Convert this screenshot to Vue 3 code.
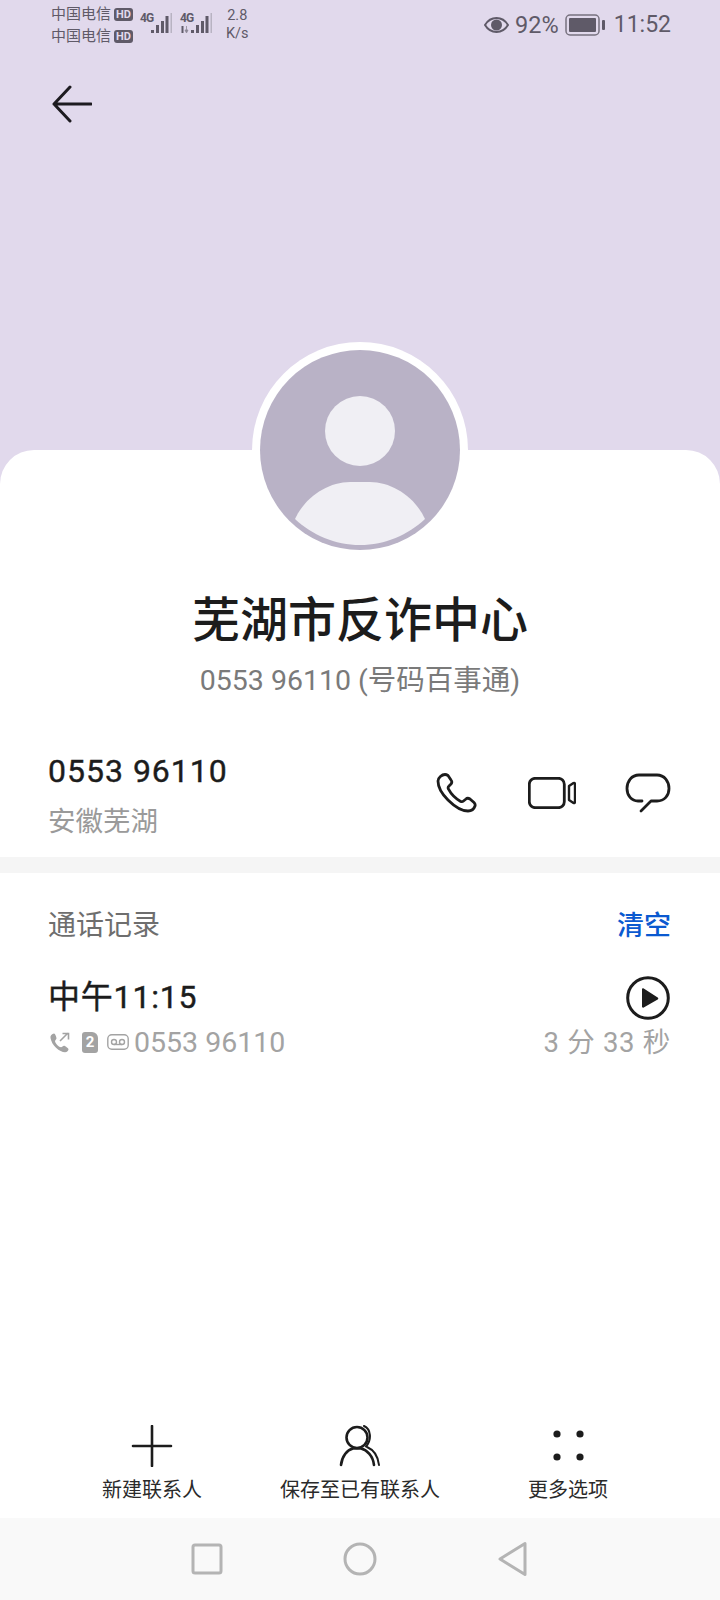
<script setup>
const signals = [
  { label: '4G', sub: false },
  { label: '4G', sub: true },
]
const tools = [
  { key: 'add', label: '新建联系人' },
  { key: 'person', label: '保存至已有联系人' },
  { key: 'more', label: '更多选项' },
]
</script>

<template>
  <div class="screen">
    <header class="top">
      <div class="status">
        <div class="carriers">
          <div v-for="n in 2" :key="n" class="carrier">中国电信<span class="hd">HD</span></div>
        </div>
        <div v-for="(s, i) in signals" :key="i" class="signal">
          <span class="net">{{ s.label }}</span>
          <svg width="33" height="24" viewBox="0 0 33 24">
            <template v-if="s.sub">
              <rect x="1.500" y="14" width="2" height="7" fill="#5f5a68" />
              <path d="M6.500 14v4M5 18l1.500 3L8 18z" fill="#8b8694" stroke="#8b8694" stroke-width=".8" />
            </template>
            <rect x="11" y="18" width="3" height="3" fill="#5f5a68" />
            <rect x="16" y="13" width="3" height="8" fill="#5f5a68" />
            <rect x="21" y="9" width="3" height="12" fill="#5f5a68" />
            <rect x="25.500" y="4" width="3" height="17" fill="#5f5a68" />
            <rect x="30.500" y="1" width="1.500" height="20" fill="#b8b3c2" />
          </svg>
        </div>
        <div class="speed"><span>2.8</span><span>K/s</span></div>
        <div class="status-right">
          <svg width="25" height="18" viewBox="0 0 25 18">
            <path d="M1 9C4 4 8 2 12.500 2S21 4 24 9c-3 5-7 7-11.500 7S4 14 1 9z" fill="none" stroke="#5f5a68" stroke-width="2" />
            <circle cx="12.500" cy="9" r="5.500" fill="#5f5a68" />
          </svg>
          <span class="pct">92%</span>
          <svg width="40" height="22" viewBox="0 0 40 22">
            <rect x="1" y="1" width="33" height="20" rx="4" fill="none" stroke="#77727f" stroke-width="1.500" />
            <rect x="4" y="4" width="27" height="14" rx="1" fill="#5f5a68" />
            <rect x="37" y="6" width="3" height="10" rx="1" fill="#5f5a68" />
          </svg>
          <span class="clock">11:52</span>
        </div>
      </div>
      <button class="back" aria-label="返回">
        <svg width="40" height="38" viewBox="0 0 40 38">
          <path d="M39 19H2M18 2L2 19l16 17" fill="none" stroke="#1d1b20" stroke-width="3" stroke-linecap="round" stroke-linejoin="round" />
        </svg>
      </button>
    </header>

    <main class="sheet">
      <div class="avatar-ring">
        <svg width="200" height="200" viewBox="0 0 200 200" class="avatar">
          <circle cx="100" cy="100" r="100" fill="#b9b2c6" />
          <circle cx="100" cy="81" r="35" fill="#f0eff4" />
          <path d="M35 169C45 147 68 132 90 132h20c22 0 45 15 55 37C148 185 125 195 100 195S52 185 35 169z" fill="#f0eff4" />
        </svg>
      </div>

      <h1 class="name">芜湖市反诈中心</h1>
      <p class="subtitle">0553 96110 (号码百事通)</p>

      <section class="number-row">
        <div>
          <div class="number">0553 96110</div>
          <div class="region">安徽芜湖</div>
        </div>
        <div class="actions">
          <svg width="42" height="42" viewBox="0 0 42 42">
            <path d="M10 2.500c-3 0-7 3-7 6.500 0 6 4 13 10 19s14 11 20 11c3 0 6-2 7-5 .5-1.500 0-2.500-1-3.500l-4-3.500c-1.500-1-3-1-4 0l-2.500 2c-1 .8-2 .8-3.200.2-4-2.200-9.500-7.700-11.800-12-.6-1.200-.5-2.300.5-3.200l2-2c1-1.200 1-2.700 0-4l-3-4.500C12.200 3 11 2.500 10 2.500z" fill="none" stroke="#1c1c1c" stroke-width="2.800" stroke-linejoin="round" />
          </svg>
          <svg width="48" height="32" viewBox="0 0 48 32">
            <rect x="1.300" y="1.300" width="35" height="29.400" rx="6" fill="none" stroke="#1c1c1c" stroke-width="2.800" />
            <path d="M41 9l4.500-3c.8-.4 1.500 0 1.500 1v18c0 1-.7 1.400-1.500 1L41 23z" fill="none" stroke="#1c1c1c" stroke-width="2.400" stroke-linejoin="round" />
          </svg>
          <svg width="46" height="40" viewBox="0 0 46 40">
            <path d="M17 28h-4C6.500 28 2 22.500 2 15.500S6.500 2 14 2h18c7.500 0 12 6.500 12 13.500S39.500 28 32 28h-6l-10 10" fill="none" stroke="#1c1c1c" stroke-width="2.800" stroke-linecap="round" stroke-linejoin="round" />
          </svg>
        </div>
      </section>

      <div class="divider"></div>

      <section class="log">
        <div class="log-head">
          <span class="log-title">通话记录</span>
          <span class="clear">清空</span>
        </div>
        <div class="log-item">
          <div class="log-main">
            <div class="log-time">中午11:15</div>
            <div class="log-meta">
              <svg class="dir" width="21" height="21" viewBox="0 0 21 21">
                <path d="M5 1.500C3 2 1 3.500 1.500 6c.7 3.500 2.500 7 5.500 9.800s6.500 4.500 9 4.500c2 0 3.500-1.500 3.500-3 0-1-3.500-3.500-4.500-3.500s-2 1.500-3 1.500c-2 0-5.500-3.500-6-6 0-1 1.500-2 1.500-3S6 1.300 5 1.500z" fill="#a3a3a3" />
                <path d="M11 9l8-8M13.500 1.500H19.500V7.500" fill="none" stroke="#a3a3a3" stroke-width="1.600" />
              </svg>
              <span class="sim">2</span>
              <svg class="vm" width="22" height="16" viewBox="0 0 22 16">
                <rect x=".8" y=".8" width="20.400" height="14.400" rx="4" fill="none" stroke="#a3a3a3" stroke-width="1.400" />
                <circle cx="7" cy="8" r="2.500" fill="none" stroke="#a3a3a3" stroke-width="1.400" />
                <circle cx="15" cy="8" r="2.500" fill="none" stroke="#a3a3a3" stroke-width="1.400" />
                <path d="M7 10.500h8" stroke="#a3a3a3" stroke-width="1.400" />
              </svg>
              <span class="log-number">0553 96110</span>
            </div>
          </div>
          <div class="log-side">
            <svg width="44" height="44" viewBox="0 0 44 44">
              <circle cx="22" cy="22" r="20.300" fill="none" stroke="#1c1c1c" stroke-width="3" />
              <path d="M16 13.500v17c0 1 .8 1.500 1.700 1l14-8c.8-.6.800-1.600 0-2.100l-14-8.900c-.9-.5-1.700 0-1.700 1z" fill="#1c1c1c" />
            </svg>
            <div class="duration">3 分 33 秒</div>
          </div>
        </div>
      </section>

      <div class="toolbar">
        <div v-for="t in tools" :key="t.key" class="tool">
          <svg width="44" height="42" viewBox="0 0 44 42">
            <template v-if="t.key === 'add'">
              <path d="M3 21h38M22 1v40" fill="none" stroke="#1c1c1c" stroke-width="2.600" stroke-linecap="round" />
            </template>
            <template v-else-if="t.key === 'person'">
              <circle cx="19" cy="12.500" r="10.500" fill="none" stroke="#1c1c1c" stroke-width="2.600" />
              <path d="M3 40C4 31 9 25 15 23.500h8C29 25 35 31 36 40" fill="none" stroke="#1c1c1c" stroke-width="2.600" stroke-linecap="round" />
              <path d="M26 1c7 3 8 14 2 20.500M29 22c7 3 11 9 12 18" fill="none" stroke="#1c1c1c" stroke-width="2" stroke-linecap="round" />
            </template>
            <template v-else>
              <circle cx="11" cy="9" r="3.600" fill="#1c1c1c" />
              <circle cx="34" cy="9" r="3.600" fill="#1c1c1c" />
              <circle cx="11" cy="32" r="3.600" fill="#1c1c1c" />
              <circle cx="34" cy="32" r="3.600" fill="#1c1c1c" />
            </template>
          </svg>
          <span class="tool-label">{{ t.label }}</span>
        </div>
      </div>
    </main>

    <nav class="navbar">
      <svg width="32" height="32" viewBox="0 0 32 32">
        <rect x="2" y="2" width="28" height="28" rx="2" fill="none" stroke="#b4b4b4" stroke-width="3" />
      </svg>
      <svg width="34" height="34" viewBox="0 0 34 34">
        <circle cx="17" cy="17" r="15" fill="none" stroke="#b4b4b4" stroke-width="3" />
      </svg>
      <svg width="32" height="36" viewBox="0 0 32 36">
        <path d="M28 2.500v31L3 18z" fill="none" stroke="#b4b4b4" stroke-width="3" stroke-linejoin="round" />
      </svg>
    </nav>
  </div>
</template>

<style scoped>
.screen {
  width: 720px;
  height: 1600px;
  display: flex;
  flex-direction: column;
  overflow: hidden;
  background: #e1d9ec;
  font-family: Roboto, "Noto Sans CJK SC", sans-serif;
  color: #1c1c1c;
}

.top {
  height: 450px;
  flex-shrink: 0;
  box-sizing: border-box;
}

.status {
  height: 50px;
  box-sizing: border-box;
  padding: 3px 49px 0 51px;
  display: flex;
  align-items: flex-start;
  color: #5f5a68;
}

.carriers {
  display: flex;
  flex-direction: column;
  width: 89px;
  flex-shrink: 0;
}

.carrier {
  display: flex;
  align-items: center;
  height: 22px;
  font-size: 15px;
  line-height: 22px;
  white-space: nowrap;
}

.hd {
  margin-left: 3px;
  width: 19px;
  height: 13px;
  border-radius: 3px;
  background: #5f5a68;
  color: #e1d9ec;
  font-size: 11px;
  font-weight: 700;
  line-height: 13px;
  text-align: center;
}

.signal {
  position: relative;
  width: 40px;
  height: 40px;
  margin-top: 9px;
  flex-shrink: 0;
}

.signal svg {
  position: absolute;
  left: 0;
  top: 0;
}

.net {
  position: absolute;
  left: 0;
  top: 0;
  font-size: 12px;
  font-weight: 700;
  line-height: 13px;
  letter-spacing: -1px;
}

.speed {
  display: flex;
  flex-direction: column;
  align-items: center;
  margin-left: 6px;
  font-size: 14.500px;
  line-height: 18px;
  margin-top: 4px;
}

.status-right {
  margin-left: auto;
  margin-top: 10px;
  display: flex;
  align-items: center;
  height: 24px;
}

.pct {
  margin-left: 6px;
  font-size: 23.500px;
  line-height: 24px;
}

.status-right svg:nth-of-type(2) {
  margin-left: 6px;
}

.clock {
  margin-left: 9px;
  font-size: 23px;
  line-height: 24px;
}

.back {
  display: block;
  margin: 35px 0 0 52px;
  padding: 0;
  border: 0;
  background: none;
  line-height: 0;
}

.sheet {
  flex: 1;
  display: flex;
  flex-direction: column;
  background: #fff;
  border-radius: 34px 34px 0 0;
}

.avatar-ring {
  align-self: center;
  width: 216px;
  height: 216px;
  margin-top: -108px;
  box-sizing: border-box;
  padding: 8px;
  border-radius: 50%;
  background: #fff;
  flex-shrink: 0;
}

.avatar {
  display: block;
}

.name {
  margin: 31px 0 0;
  text-align: center;
  font-size: 48px;
  line-height: 64px;
  font-weight: 500;
  color: #1c1c1c;
}

.subtitle {
  margin: 10px 0 0;
  text-align: center;
  font-size: 28.500px;
  line-height: 36px;
  color: #7a7a7a;
}

.number-row {
  margin-top: 50px;
  padding: 0 49px 0 48px;
  display: flex;
  justify-content: space-between;
  align-items: flex-start;
  height: 108px;
}

.number {
  font-size: 32px;
  line-height: 44px;
  font-weight: 400;
  letter-spacing: 1px;
  -webkit-text-stroke: 0.4px #1c1c1c;
}

.region {
  margin-top: 9px;
  font-size: 27.500px;
  line-height: 40px;
  color: #9a9a9a;
}

.actions {
  display: flex;
  align-items: center;
  gap: 50px;
  margin-top: 23px;
}

.actions svg:nth-child(2) {
  margin-left: 1px;
  margin-right: -1px;
}

.divider {
  height: 16px;
  background: #f5f5f5;
  flex-shrink: 0;
}

.log {
  padding: 28px 49px 0 48px;
}

.log-head {
  display: flex;
  justify-content: space-between;
  align-items: center;
  height: 44px;
}

.log-title {
  font-size: 28px;
  color: #6e6e6e;
}

.clear {
  font-size: 27px;
  font-weight: 500;
  color: #0a59d0;
}

.log-item {
  display: flex;
  justify-content: space-between;
  margin-top: 29px;
}

.log-time {
  font-size: 32px;
  line-height: 46px;
  font-weight: 400;
  letter-spacing: 0.8px;
  -webkit-text-stroke: 0.4px #1c1c1c;
}

.log-meta {
  display: flex;
  align-items: center;
  height: 44px;
}

.dir {
  margin-left: 1px;
}

.sim {
  width: 16px;
  height: 21px;
  margin-left: 12px;
  border-radius: 3px 6px 3px 3px;
  background: #a3a3a3;
  color: #fff;
  font-size: 15px;
  font-weight: 700;
  line-height: 21px;
  text-align: center;
}

.vm {
  margin-left: 9px;
}

.log-number {
  margin-left: 5px;
  font-size: 28.500px;
  color: #a3a3a3;
}

.log-side {
  display: flex;
  flex-direction: column;
  align-items: flex-end;
}

.log-side svg {
  margin-top: 2px;
  margin-right: 1px;
}

.duration {
  margin-top: 1px;
  font-size: 27.500px;
  line-height: 44px;
  color: #a3a3a3;
  letter-spacing: 0.7px;
}

.toolbar {
  margin-top: auto;
  padding: 0 48px 13px;
  display: grid;
  grid-template-columns: repeat(3, 1fr);
}

.tool {
  display: flex;
  flex-direction: column;
  align-items: center;
}

.tool-label {
  margin-top: 8px;
  font-size: 20px;
  line-height: 30px;
  color: #2a2a2a;
  white-space: nowrap;
}

.navbar {
  height: 82px;
  flex-shrink: 0;
  background: #f9f9f9;
  display: grid;
  grid-template-columns: repeat(3, 153px);
  justify-content: center;
  justify-items: center;
  align-items: center;
}
</style>
